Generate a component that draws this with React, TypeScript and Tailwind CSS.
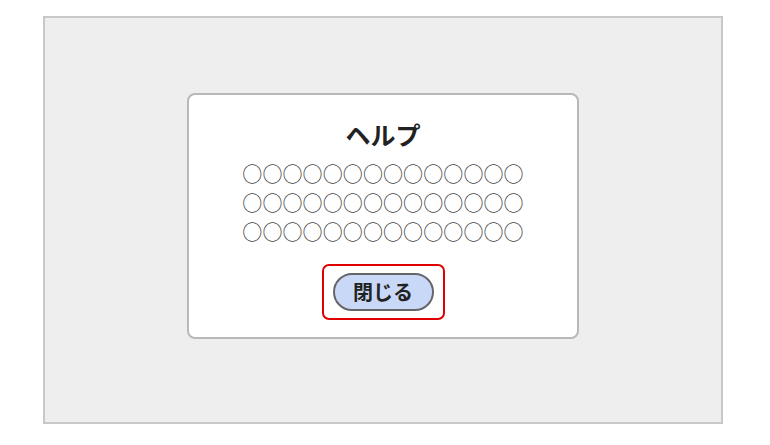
import React from 'react';

const lines = ['○○○○○○○○○○○○○○', '○○○○○○○○○○○○○○', '○○○○○○○○○○○○○○'];

export default function App() {
  return (
    <div
      className="w-[770px] h-[445px] bg-white pt-[16px] pl-[43px]"
      style={{ fontFamily: '"Noto Sans CJK JP", "Noto Sans", sans-serif' }}
    >
      <div className="w-[680px] h-[408px] bg-[#eeeeee] border-2 border-[#c8c8c8] flex justify-center pt-[75px]">
        <div className="w-[392px] h-[246px] bg-white border-2 border-[#b8b8b8] rounded-[8px] flex flex-col items-center pt-[21px]">
          <h2 className="text-[25px] leading-[36px] font-bold text-[#222222]">ヘルプ</h2>
          <div className="mt-[7px] text-[20px] tracking-[0.1px] leading-[29px] text-[#444444] text-center">
            {lines.map((l, i) => (
              <p key={i}>{l}</p>
            ))}
          </div>
          <div className="mt-[18px] border-2 border-[#e00000] rounded-[7px] px-[9px] py-[7px]">
            <button className="w-[101px] h-[38px] rounded-full bg-[#cad8f8] border-2 border-[#666666] text-[20px] font-bold text-[#222222] flex items-center justify-center">
              閉じる
            </button>
          </div>
        </div>
      </div>
    </div>
  );
}
